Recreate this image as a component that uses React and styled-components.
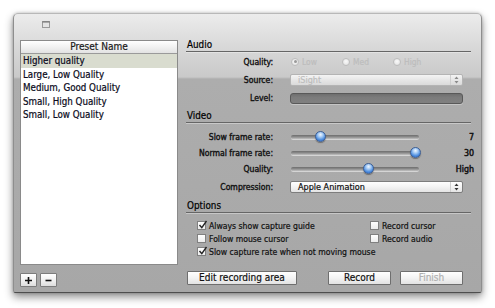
import styled, { createGlobalStyle } from "styled-components";

const GlobalStyle = createGlobalStyle`
  html, body {
    margin: 0;
    padding: 0;
    background: #ffffff;
  }
  body {
    font-family: "DejaVu Sans Condensed", "Liberation Sans", sans-serif;
    color: #000;
    -webkit-text-stroke: 0.2px currentColor;
  }
`;

const Page = styled.div`
  width: 495px;
  height: 308px;
  padding: 13px 0 0 13px;
  box-sizing: border-box;
`;

const Window = styled.div`
  width: 469px;
  height: 280px;
  box-sizing: border-box;
  border: 1px solid #8e8e8e;
  border-top-color: #b8b8b8;
  border-bottom-color: #4e4e4e;
  border-radius: 5px 5px 2px 2px;
  background: linear-gradient(
    to bottom,
    #ececec 0px,
    #dadada 30px,
    #c9c9c9 63px,
    #adadad 65px,
    #a7a7a7 100%
  );
  box-shadow: 0 4px 9px rgba(0, 0, 0, 0.45), 0 0 3px rgba(0, 0, 0, 0.2);
  display: flex;
  flex-direction: column;
`;

const TitleBar = styled.div`
  height: 26px;
  display: flex;
  align-items: flex-start;
  padding: 7px 0 0 28px;
  box-sizing: border-box;
`;

const Content = styled.div`
  display: grid;
  grid-template-columns: 158px 285px;
  column-gap: 8px;
  padding-left: 6px;
`;

const LeftColumn = styled.div`
  display: flex;
  flex-direction: column;
`;

const Table = styled.div`
  height: 223px;
  border: 1px solid #8a8a8a;
  background: #fff;
  display: flex;
  flex-direction: column;
`;

const TableHeader = styled.div`
  height: 12px;
  line-height: 12px;
  text-align: center;
  font-size: 10px;
  color: #1a1a1a;
  border-bottom: 1px solid #9a9a9a;
  background: linear-gradient(to bottom, #ffffff, #f1f1f1 50%, #e2e2e2);
`;

const TableRow = styled.div`
  height: 13.5px;
  line-height: 13.5px;
  padding-left: 2px;
  font-size: 9.7px;
  color: #0a0a20;
  background: ${(p) => (p.$selected ? "#d9dccf" : "transparent")};
`;

const SmallButtons = styled.div`
  display: flex;
  gap: 3px;
  margin-top: 8px;
`;

const SquareButton = styled.button`
  width: 17px;
  height: 14px;
  padding: 0;
  border: 1px solid #7c7c7c;
  border-radius: 1px;
  background: linear-gradient(to bottom, #ffffff, #eeeeee 60%, #dddddd);
  display: flex;
  align-items: center;
  justify-content: center;
`;

const RightColumn = styled.div`
  display: flex;
  flex-direction: column;
`;

const SectionTitle = styled.div`
  height: ${(p) => p.$h}px;
  box-sizing: border-box;
  display: flex;
  align-items: flex-end;
  padding: 0 0 1px 1px;
  font-size: 9.8px;
  border-bottom: 1px solid #666;
  box-shadow: 0 1px 0 rgba(255, 255, 255, 0.35);
  margin-bottom: ${(p) => p.$mb || 0}px;
`;

const FormRow = styled.div`
  height: ${(p) => p.$h}px;
  display: grid;
  grid-template-columns: 87px ${(p) => (p.$slider ? "128px 37px" : "173px")};
  column-gap: ${(p) => (p.$slider ? 18 : 17)}px;
  align-items: center;
`;

const Label = styled.div`
  text-align: right;
  font-size: 8.6px;
  color: #111;
  -webkit-text-stroke: 0.35px #111;
`;

const Value = styled.div`
  text-align: right;
  font-size: 8.8px;
  color: #111;
  -webkit-text-stroke: 0.45px #111;
`;

const Radios = styled.div`
  display: flex;
  padding-left: 1px;
`;

const RadioItem = styled.div`
  width: 51px;
  display: flex;
  align-items: center;
  gap: 3px;
  font-size: 8.4px;
  color: #bdbdbd;
`;

const RadioDot = styled.span`
  width: 8px;
  height: 8px;
  box-sizing: border-box;
  border-radius: 50%;
  border: 1px solid #bdbdbd;
  background: radial-gradient(circle at 50% 40%, #fafafa, #dedede);
  display: flex;
  align-items: center;
  justify-content: center;
  &::after {
    content: "";
    width: 3px;
    height: 3px;
    border-radius: 50%;
    background: ${(p) => (p.$on ? "#9a9a9a" : "transparent")};
  }
`;

const Popup = styled.div`
  height: 12px;
  box-sizing: border-box;
  border: 1px solid ${(p) => (p.$disabled ? "#b4b4b4" : "#7d7d7d")};
  border-radius: 2px;
  background: ${(p) =>
    p.$disabled
      ? "linear-gradient(to bottom, #f4f4f4, #e6e6e6 50%, #dadada)"
      : "linear-gradient(to bottom, #ffffff, #f3f3f3 50%, #e4e4e4)"};
  display: flex;
  align-items: center;
  font-size: 9px;
  color: ${(p) => (p.$disabled ? "#bdbdbd" : "#111")};
`;

const PopupText = styled.span`
  flex: 1;
  padding-left: 7px;
  line-height: 10px;
`;

const PopupArrows = styled.span`
  width: 11px;
  height: 10px;
  border-left: 1px solid #cfcfcf;
  display: flex;
  align-items: center;
  justify-content: center;
`;

const LevelBar = styled.div`
  height: 11px;
  box-sizing: border-box;
  border: 1px solid #595959;
  border-radius: 3px;
  background: linear-gradient(to bottom, #6f6f6f, #7c7c7c 40%, #808080);
  box-shadow: 0 1px 0 rgba(255, 255, 255, 0.3);
`;

const Track = styled.div`
  position: relative;
  height: 4px;
  border-radius: 2px;
  background: linear-gradient(to bottom, #6d6d6d, #8d8d8d 50%, #c2c2c2);
  box-shadow: 0 1px 0 rgba(255, 255, 255, 0.5);
`;

const Knob = styled.span`
  position: absolute;
  top: 50%;
  width: 11px;
  height: 11px;
  margin: -6px 0 0 -5px;
  box-sizing: border-box;
  border-radius: 50%;
  border: 1px solid #3d5f95;
  background: radial-gradient(
    circle at 50% 30%,
    #f2f8ff 0,
    #a9cdf5 30%,
    #4f8fe0 65%,
    #2a62c2 100%
  );
  box-shadow: 0 1px 1px rgba(0, 0, 0, 0.35);
`;

const Checks = styled.div`
  display: grid;
  grid-template-columns: 173px 1fr;
  grid-auto-rows: 13px;
  padding-left: 11px;
  margin-top: 6px;
`;

const CheckItem = styled.label`
  display: flex;
  align-items: center;
  gap: 3px;
  font-size: 8.6px;
  color: #111;
  grid-column: ${(p) => p.$col || "auto"};
  grid-row: ${(p) => p.$row || "auto"};
`;

const Box = styled.span`
  width: 9px;
  height: 9px;
  box-sizing: border-box;
  border: 1px solid #808080;
  background: linear-gradient(to bottom, #ffffff, #ececec);
  position: relative;
  flex: none;
`;

const ButtonRow = styled.div`
  display: flex;
  margin-top: 13px;
  padding-left: 1px;
`;

const PushButton = styled.button`
  width: ${(p) => p.$w}px;
  height: 14px;
  margin-left: ${(p) => p.$ml || 0}px;
  padding: 0;
  box-sizing: border-box;
  border: 1px solid #6e6e6e;
  border-radius: 1px;
  background: linear-gradient(to bottom, #ffffff, #f4f4f4 45%, #e3e3e3);
  font-family: inherit;
  font-size: 10px;
  line-height: 12px;
  color: ${(p) => (p.$disabled ? "#b0b0b0" : "#111")};
  -webkit-text-stroke: 0.2px currentColor;
`;

const TitleIcon = () => (
  <svg width="8" height="7" viewBox="0 0 8 7">
    <rect x="0.5" y="0.5" width="7" height="6" fill="#e4e4e4" stroke="#9a9a9a" />
    <line x1="0.5" y1="1" x2="7.5" y2="1" stroke="#6e6e6e" />
  </svg>
);

const UpDown = ({ color }) => (
  <svg width="5" height="8" viewBox="0 0 5 8">
    <path d="M2.5 0.5 L4.5 3 L0.5 3 Z" fill={color} />
    <path d="M2.5 7.5 L4.5 5 L0.5 5 Z" fill={color} />
  </svg>
);

const Tick = () => (
  <svg
    width="10"
    height="10"
    viewBox="0 0 10 10"
    style={{ position: "absolute", left: 0, top: -2 }}
  >
    <path
      d="M1.5 5 L3.8 7.6 L8.5 1"
      fill="none"
      stroke="#222"
      strokeWidth="1.4"
    />
  </svg>
);

const presets = [
  "Higher quality",
  "Large, Low Quality",
  "Medium, Good Quality",
  "Small, High Quality",
  "Small, Low Quality",
];

const sliders = [
  { label: "Slow frame rate:", pos: 23, value: "7" },
  { label: "Normal frame rate:", pos: 97, value: "30" },
  { label: "Quality:", pos: 60, value: "High" },
];

const Check = ({ on, children, row, col }) => (
  <CheckItem $row={row} $col={col}>
    <Box>{on && <Tick />}</Box>
    {children}
  </CheckItem>
);

export default function App() {
  return (
    <Page>
      <GlobalStyle />
      <Window>
        <TitleBar>
          <TitleIcon />
        </TitleBar>
        <Content>
          <LeftColumn>
            <Table>
              <TableHeader>Preset Name</TableHeader>
              {presets.map((name, i) => (
                <TableRow key={name} $selected={i === 0}>
                  {name}
                </TableRow>
              ))}
            </Table>
            <SmallButtons>
              <SquareButton>
                <svg width="9" height="9" viewBox="0 0 9 9">
                  <path d="M4.5 1 V8 M1 4.5 H8" stroke="#111" strokeWidth="1.6" />
                </svg>
              </SquareButton>
              <SquareButton>
                <svg width="9" height="9" viewBox="0 0 9 9">
                  <path d="M1.5 4.5 H7.5" stroke="#111" strokeWidth="1.6" />
                </svg>
              </SquareButton>
            </SmallButtons>
          </LeftColumn>

          <RightColumn>
            <SectionTitle $h={12}>Audio</SectionTitle>
            <FormRow $h={19}>
              <Label>Quality:</Label>
              <Radios>
                <RadioItem>
                  <RadioDot $on />
                  Low
                </RadioItem>
                <RadioItem>
                  <RadioDot />
                  Med
                </RadioItem>
                <RadioItem>
                  <RadioDot />
                  High
                </RadioItem>
              </Radios>
            </FormRow>
            <FormRow $h={17}>
              <Label>Source:</Label>
              <Popup $disabled>
                <PopupText>iSight</PopupText>
                <PopupArrows>
                  <UpDown color="#8a8a8a" />
                </PopupArrows>
              </Popup>
            </FormRow>
            <FormRow $h={20}>
              <Label>Level:</Label>
              <LevelBar />
            </FormRow>

            <SectionTitle $h={15} $mb={6}>
              Video
            </SectionTitle>
            {sliders.map((s) => (
              <FormRow key={s.label} $h={16} $slider>
                <Label>{s.label}</Label>
                <Track>
                  <Knob style={{ left: `${s.pos}%` }} />
                </Track>
                <Value>{s.value}</Value>
              </FormRow>
            ))}
            <FormRow $h={19}>
              <Label>Compression:</Label>
              <Popup>
                <PopupText>Apple Animation</PopupText>
                <PopupArrows>
                  <UpDown color="#333" />
                </PopupArrows>
              </Popup>
            </FormRow>

            <SectionTitle $h={17}>Options</SectionTitle>
            <Checks>
              <Check on row={1} col={1}>
                Always show capture guide
              </Check>
              <Check row={1} col={2}>
                Record cursor
              </Check>
              <Check row={2} col={1}>
                Follow mouse cursor
              </Check>
              <Check row={2} col={2}>
                Record audio
              </Check>
              <Check on row={3} col="1 / span 2">
                Slow capture rate when not moving mouse
              </Check>
            </Checks>

            <ButtonRow>
              <PushButton $w={110}>Edit recording area</PushButton>
              <PushButton $w={63} $ml={31}>
                Record
              </PushButton>
              <PushButton $w={63} $ml={9} $disabled>
                Finish
              </PushButton>
            </ButtonRow>
          </RightColumn>
        </Content>
      </Window>
    </Page>
  );
}
